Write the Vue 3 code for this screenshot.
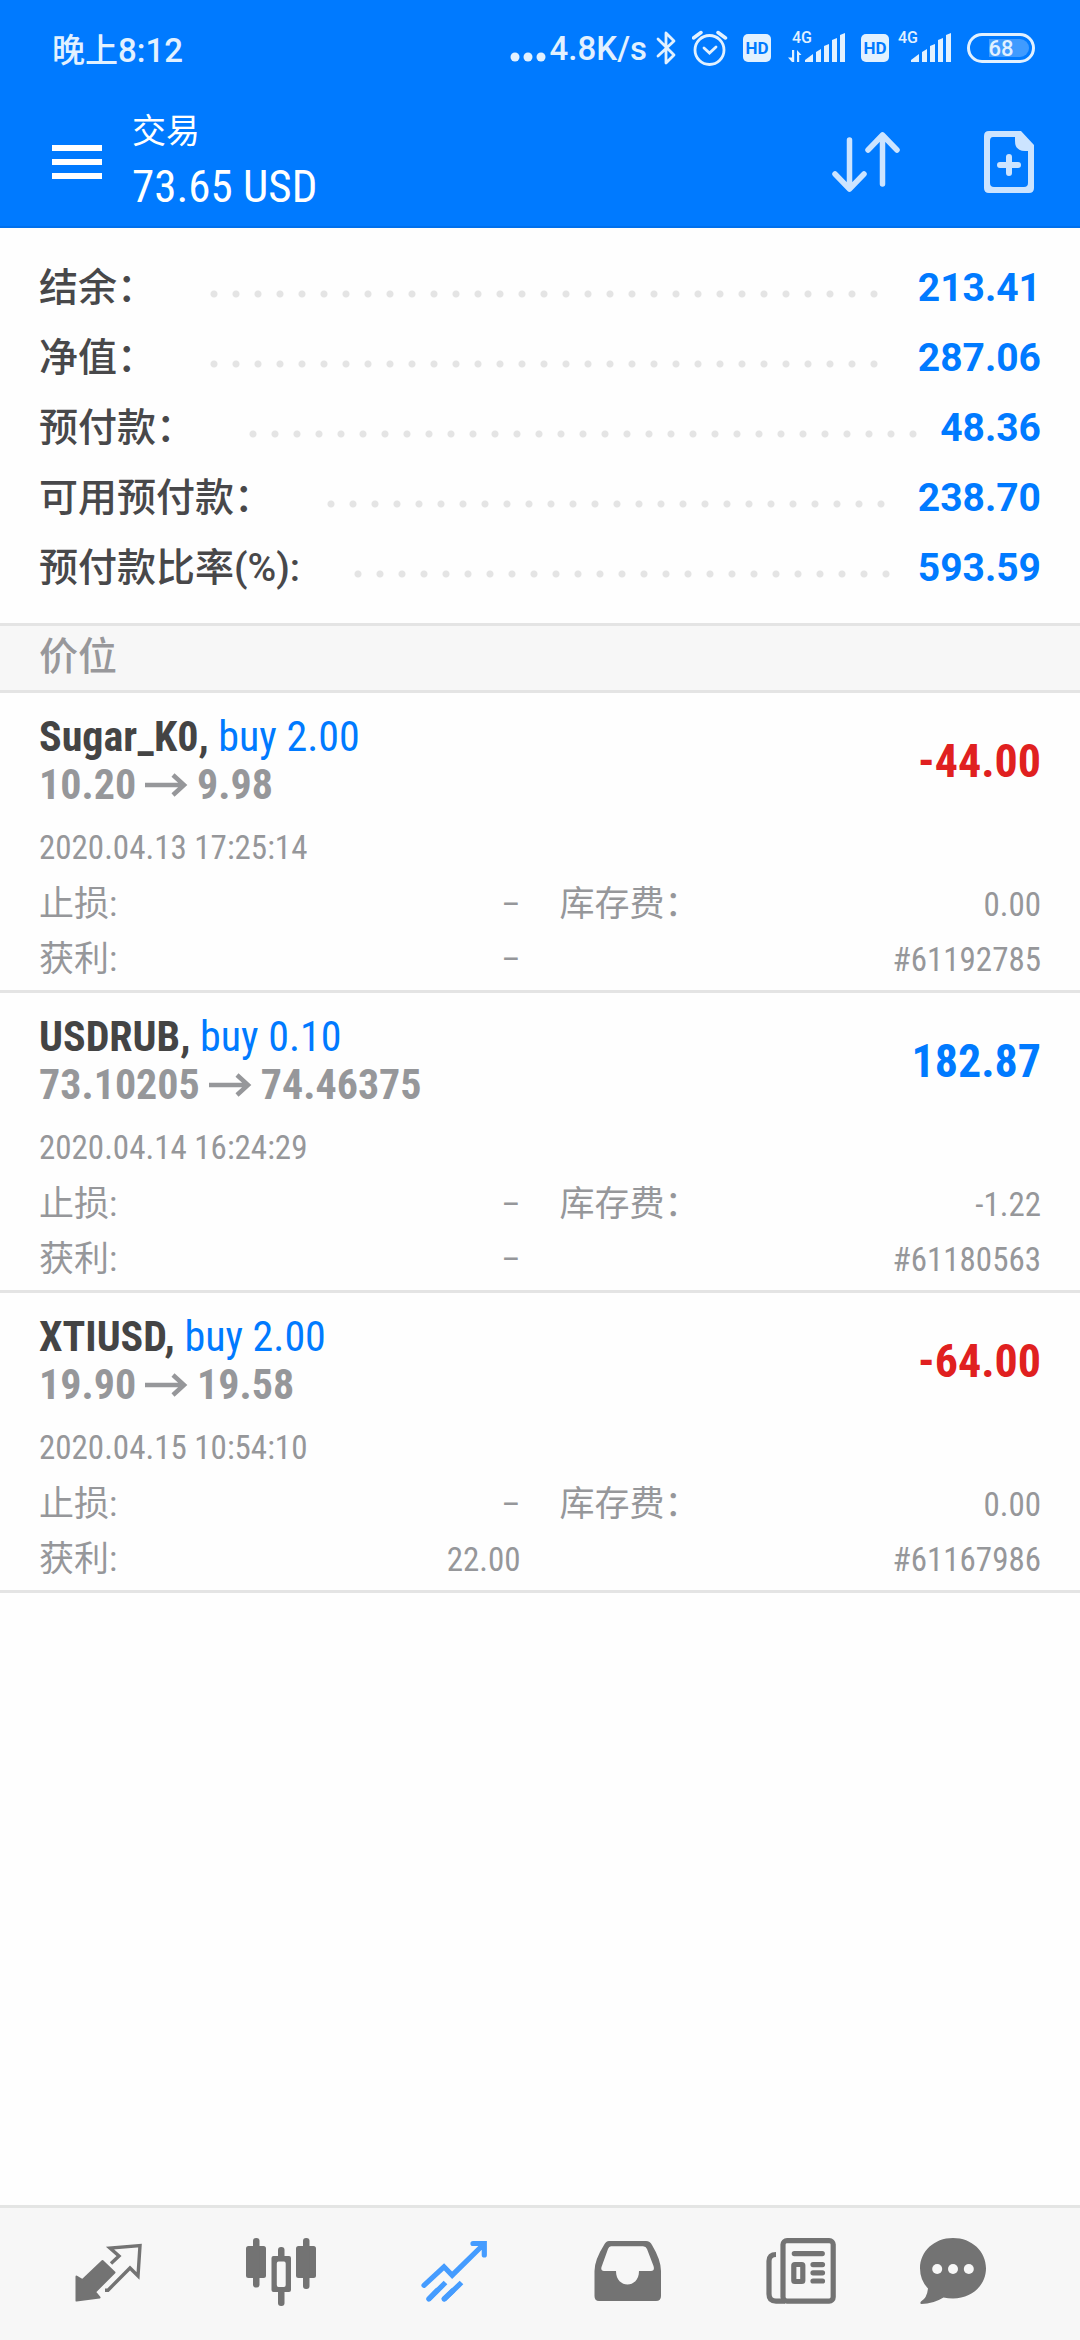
<script setup>
const account = [
  { label: '结余：', value: '213.41' },
  { label: '净值：', value: '287.06' },
  { label: '预付款：', value: '48.36' },
  { label: '可用预付款：', value: '238.70' },
  { label: '预付款比率(%):', value: '593.59' },
]

const positions = [
  { symbol: 'Sugar_K0', side: 'buy 2.00', open: '10.20', price: '9.98', profit: '-44.00', time: '2020.04.13 17:25:14', sl: '–', tp: '–', swap: '0.00', id: '#61192785' },
  { symbol: 'USDRUB', side: 'buy 0.10', open: '73.10205', price: '74.46375', profit: '182.87', time: '2020.04.14 16:24:29', sl: '–', tp: '–', swap: '-1.22', id: '#61180563' },
  { symbol: 'XTIUSD', side: 'buy 2.00', open: '19.90', price: '19.58', profit: '-64.00', time: '2020.04.15 10:54:10', sl: '–', tp: '22.00', swap: '0.00', id: '#61167986' },
]
</script>

<template>
  <div class="app">
    <header class="top">
      <div class="status">
        <span class="clock">晚上8:12</span>
        <div class="status-icons">
          <svg class="dots" width="36" height="36" viewBox="0 0 36 36" fill="currentColor">
            <circle cx="5" cy="27" r="4.500" /><circle cx="18" cy="27" r="4.500" /><circle cx="31" cy="27" r="4.500" />
          </svg>
          <span class="speed">4.8K/s</span>
          <svg width="27" height="36" viewBox="0 0 27 36" fill="none" stroke="currentColor" stroke-width="2.800" stroke-linejoin="round" stroke-linecap="round">
            <path d="M2 9 L18 25 L10 33 V3 L18 11 L2 26" />
          </svg>
          <svg width="42" height="36" viewBox="0 0 42 36" fill="none" stroke="currentColor" stroke-width="2.800" stroke-linecap="round">
            <circle cx="17.500" cy="20" r="14.500" />
            <path d="M12 18 L17.500 23 L24 17" />
            <path d="M1.500 8 L9 2.500 M26 2.500 L33.500 8" stroke-width="3.500" />
          </svg>
          <svg width="28" height="36" viewBox="0 0 28 36">
            <rect x="0" y="4" width="28" height="28" rx="5" fill="currentColor" />
            <text class="hd" x="14" y="24" text-anchor="middle">HD</text>
          </svg>
          <svg width="72" height="52" viewBox="0 -8 72 52" fill="currentColor">
            <text class="net" x="12" y="13">4G</text>
            <path d="M12 20 h2.200 V32 H12 L8 27.500 h4z M17 20 l4.500 5 h-2.300 V32 H17z" />
            <path d="M25 32 V30 L33 24 V32z M36 22 L41 19 V32 H36z M44 16 L49 14 V32 H44z M52 10 L57 8 V32 H52z M60 5 L65 3 V32 H60z" />
          </svg>
          <svg width="28" height="36" viewBox="0 0 28 36">
            <rect x="0" y="4" width="28" height="28" rx="5" fill="currentColor" />
            <text class="hd" x="14" y="24" text-anchor="middle">HD</text>
          </svg>
          <svg width="60" height="52" viewBox="0 -8 60 52" fill="currentColor">
            <text class="net" x="0" y="13">4G</text>
            <path d="M13 32 V30 L21 24 V32z M24 22 L29 19 V32 H24z M32 16 L37 14 V32 H32z M40 10 L45 8 V32 H40z M48 5 L53 3 V32 H48z" />
          </svg>
          <svg width="68" height="36" viewBox="0 0 68 36">
            <rect x="1.500" y="4.500" width="65" height="27" rx="13.500" fill="none" stroke="currentColor" stroke-width="3" />
            <path d="M22 9 H53 A9 9 0 0 1 53 27 H22z" fill="#409bff" />
            <text class="charge" x="34" y="26" text-anchor="middle">68</text>
          </svg>
        </div>
      </div>
      <div class="toolbar">
        <button class="tool" aria-label="菜单">
          <svg width="50" height="34" viewBox="0 0 50 34" fill="#fff">
            <rect width="50" height="6" /><rect y="14" width="50" height="6" /><rect y="28" width="50" height="6" />
          </svg>
        </button>
        <h1 class="title">
          <span class="name">交易</span>
          <span class="total">73.65 USD</span>
        </h1>
        <button class="tool sort" aria-label="排序">
          <svg width="68" height="62" viewBox="0 0 68 62" fill="none" stroke="#cce4ff" stroke-width="5.500" stroke-linecap="round" stroke-linejoin="round">
            <path d="M17.500 9 V58 M3 43 L17.500 58 L32 43" />
            <path d="M50.500 53 V4 M36 19 L50.500 4 L65 19" />
          </svg>
        </button>
        <button class="tool" aria-label="新订单">
          <svg width="50" height="62" viewBox="0 0 50 62">
            <path fill="#cce4ff" fill-rule="evenodd" d="M5 0 H37 L50 14 V57 Q50 62 45 62 H5 Q0 62 0 57 V5 Q0 0 5 0z M9 6 Q6 6 6 10 V52 Q6 56 10 56 H40 Q44 56 44 52 V20 H41 Q31 20 31 10 V6z" />
            <path d="M25 26 V42 M16 34 H34" stroke="#cce4ff" stroke-width="6" stroke-linecap="round" />
          </svg>
        </button>
      </div>
    </header>

    <main class="content">
      <dl class="account">
        <div v-for="row in account" :key="row.label" class="account-row">
          <dt>{{ row.label }}</dt>
          <dd>
            <span class="leader"><span class="leader-dots"></span></span>
            <span>{{ row.value }}</span>
          </dd>
        </div>
      </dl>

      <h2 class="section">价位</h2>

      <ul class="positions">
        <li v-for="p in positions" :key="p.id" class="position">
          <div class="summary">
            <div class="deal">
              <p><b class="symbol">{{ p.symbol }},</b> <span class="side">{{ p.side }}</span></p>
              <p class="prices">
                <span>{{ p.open }}</span>
                <svg width="43" height="24" viewBox="0 0 43 24" fill="none" stroke="currentColor" stroke-width="4.500" aria-label="→">
                  <path d="M0 12 H39 M28 2 L39 12 L28 22" />
                </svg>
                <span>{{ p.price }}</span>
              </p>
            </div>
            <strong class="profit" :class="{ loss: p.profit.startsWith('-') }">{{ p.profit }}</strong>
          </div>
          <p class="time">{{ p.time }}</p>
          <div class="details">
            <p><span>止损:</span><span class="number">{{ p.sl }}</span></p>
            <p><span>库存费：</span><span class="number">{{ p.swap }}</span></p>
            <p><span>获利:</span><span class="number">{{ p.tp }}</span></p>
            <p class="ticket"><span class="number">{{ p.id }}</span></p>
          </div>
        </li>
      </ul>
    </main>

    <nav class="tabs">
      <a href="#quotes" aria-label="行情">
        <svg width="104" height="72" viewBox="0 0 104 72">
          <path fill="currentColor" stroke="currentColor" stroke-width="2" stroke-linejoin="round" d="M20.500 62.500 V38.500 L26.500 42 L46.500 23 L58.500 34.500 L39 54 L43.500 59.500z" />
          <path fill="none" stroke="currentColor" stroke-width="3.400" d="M49 52.200 H52 L74 30 L82 38 L84 7.500 L54 10 L63 18 L55 25.500" />
        </svg>
      </a>
      <a href="#charts" aria-label="图表">
        <svg width="104" height="72" viewBox="0 0 104 72" fill="currentColor">
          <rect x="17" y="8" width="20" height="32" rx="2.500" /><rect x="24" width="6.500" height="49.500" rx="3" />
          <rect x="67" y="8" width="20" height="32" rx="2.500" /><rect x="74" width="6.500" height="51" rx="3" />
          <rect x="49" y="9" width="6.500" height="14" rx="3" /><rect x="49" y="50" width="6.500" height="18" rx="3" />
          <path fill-rule="evenodd" d="M44.500 18 H60 Q62 18 62 20 V52 Q62 54 60 54 H44.500 Q42.500 54 42.500 52 V20 Q42.500 18 44.500 18z M49.500 23.500 Q47.800 23.500 47.800 25.500 V47 Q47.800 49 49.500 49 H55 Q56.700 49 56.700 47 V25.500 Q56.700 23.500 55 23.500z" />
        </svg>
      </a>
      <a href="#trade" class="active" aria-label="交易" aria-current="page">
        <svg width="104" height="72" viewBox="0 0 104 72" fill="none" stroke="currentColor" stroke-width="5.200">
          <path stroke-linecap="round" d="M22 47.300 L42 28.800 L50.200 37.200 L82 6 M71 5.500 H82.300 V17" />
          <path d="M26.500 61.500 L43.500 44.500 M42 61.500 L59.500 44.500" />
          <path stroke-linecap="round" d="M26.700 61 L35 52.500 M42 61 L51 52.500" />
        </svg>
      </a>
      <a href="#history" aria-label="历史">
        <svg width="104" height="72" viewBox="0 0 104 72" fill="currentColor">
          <path fill-rule="evenodd" d="M35 3 H72 Q76 3 78 7 Q87 22 87 33 V58 Q87 63 82 63 H25 Q20.500 63 20.500 58 V33 Q20.500 22 30 7 Q32 3 35 3z M37 8.300 Q35 8.300 34 11 L27.500 29 Q26.500 33 30 33 H42 C42 51 65 51 65 33 H77 Q81 33 79.500 28 L73 11 Q72 8.300 69 8.300z" />
        </svg>
      </a>
      <a href="#news" aria-label="新闻">
        <svg width="104" height="72" viewBox="0 0 104 72" fill="none" stroke="currentColor" stroke-width="5.200">
          <rect x="36" y="2.600" width="50.200" height="60.500" rx="4" />
          <path d="M29 16.500 Q22 16.500 22 23 V56 Q22 63.100 29 63.100 H38" />
          <rect x="46.800" y="26.500" width="9" height="17" rx="1" />
          <path stroke-linecap="round" d="M47.300 15.600 H75.300 M66 26.600 H75.500 M66 34.800 H75.500 M66 43 H75.500" />
        </svg>
      </a>
      <a href="#mail" aria-label="邮箱">
        <svg width="104" height="72" viewBox="0 0 104 72">
          <path fill="currentColor" d="M33 0 C52 0 66 13.500 66 30.200 C66 47 52 60.500 33 60.500 Q28 60.500 23.500 59.500 Q13 66 1.500 66 Q-0.500 65.500 1 63.500 Q7 60 8 50.500 Q0 42 0 30.200 C0 13.500 14 0 33 0z" />
          <circle cx="17.200" cy="31" r="5" fill="#f7f7f7" /><circle cx="33" cy="31" r="5" fill="#f7f7f7" /><circle cx="48.800" cy="31" r="5" fill="#f7f7f7" />
        </svg>
      </a>
    </nav>
  </div>
</template>

<style>
body {
  margin: 0;
  background: #fefefe;
}
</style>

<style scoped>
.app {
  display: flex;
  flex-direction: column;
  min-height: 100vh;
  color: #96979a;
  font-family: 'Roboto Condensed', Roboto, 'Noto Sans CJK SC', sans-serif;
}

p,
h1,
h2,
ul,
dl,
dd {
  margin: 0;
  padding: 0;
}

svg {
  display: block;
  flex: none;
}

.top {
  background: #007aff;
  border-bottom: 2px solid #0070ec;
}

.status {
  display: flex;
  align-items: center;
  justify-content: space-between;
  height: 96px;
  padding: 0 45px 2px 52px;
  color: #e2f1ff;
  font-family: Roboto, 'Noto Sans CJK SC', sans-serif;
  font-weight: 500;
}

.clock {
  font-size: 33px;
}

.status-icons {
  display: flex;
  align-items: center;
  gap: 9px;
}

.dots {
  margin-right: -5px;
}

.speed {
  font-size: 33px;
}

.hd {
  font-size: 17px;
  font-weight: 700;
  fill: #007aff;
}

.net {
  font-size: 16px;
}

.charge {
  font-size: 22px;
  fill: currentColor;
}

.toolbar {
  display: flex;
  align-items: center;
  height: 128px;
  padding: 0 46px 0 52px;
}

.tool {
  padding: 0;
  border: 0;
  background: none;
  cursor: pointer;
}

.title {
  flex: 1;
  margin-left: 30px;
  padding-bottom: 6px;
  color: #fff;
  font-weight: 400;
}

.name,
.total {
  display: block;
}

.name {
  font-size: 34px;
  line-height: 56px;
}

.total {
  font-size: 45px;
  line-height: 56px;
}

.sort {
  margin-right: 84px;
}

.content {
  flex: 1;
}

.account {
  padding: 25px 39px 20px;
  font-family: Roboto, 'Noto Sans CJK SC', sans-serif;
  font-size: 39px;
  font-weight: 500;
  line-height: 70px;
}

.account-row,
.account-row dd {
  display: flex;
}

.account-row dt {
  color: #48484a;
}

.account-row dd {
  flex: 1;
  color: #007aff;
  font-weight: 700;
}

.leader {
  display: flex;
  flex: 1;
  align-items: center;
  margin: 12px 8px 0 54px;
}

.leader-dots {
  width: round(down, 100%, 22px);
  height: 8px;
  background: radial-gradient(circle at 4px 4px, #e4e4e4 3px, transparent 4px) 0 0 / 22px 8px;
}

.section {
  padding: 3px 39px 5px;
  border: solid #e4e4e4;
  border-width: 3px 0;
  background: #f7f7f7;
  color: #98989b;
  font-size: 39px;
  font-weight: 500;
  line-height: 56px;
}

.positions {
  list-style: none;
}

.position {
  padding: 20px 39px 3px;
  border-bottom: 3px solid #e4e4e4;
}

.summary {
  display: flex;
  align-items: center;
  justify-content: space-between;
  font-size: 42px;
  line-height: 48px;
}

.symbol {
  color: #444;
}

.side {
  color: #007aff;
}

.prices {
  display: flex;
  align-items: center;
  gap: 9px;
  font-weight: 700;
}

.profit {
  color: #007aff;
  font-size: 46px;
}

.profit.loss {
  color: #e02020;
}

.time {
  margin-top: 10px;
  font-size: 33px;
  line-height: 58px;
}

.details {
  display: grid;
  grid-template-columns: 1fr 1fr;
  column-gap: 39px;
  font-size: 35px;
  line-height: 55px;
}

.details p {
  display: flex;
  justify-content: space-between;
}

.details .ticket {
  justify-content: flex-end;
}

.number {
  font-size: 33px;
}

.tabs {
  display: flex;
  height: 132px;
  padding: 0 22px;
  border-top: 3px solid #e4e5e4;
  background: #f7f7f7;
}

.tabs a {
  display: flex;
  flex: 1;
  align-items: center;
  justify-content: center;
  color: #737373;
}

.tabs .active {
  color: #459cff;
}
</style>
